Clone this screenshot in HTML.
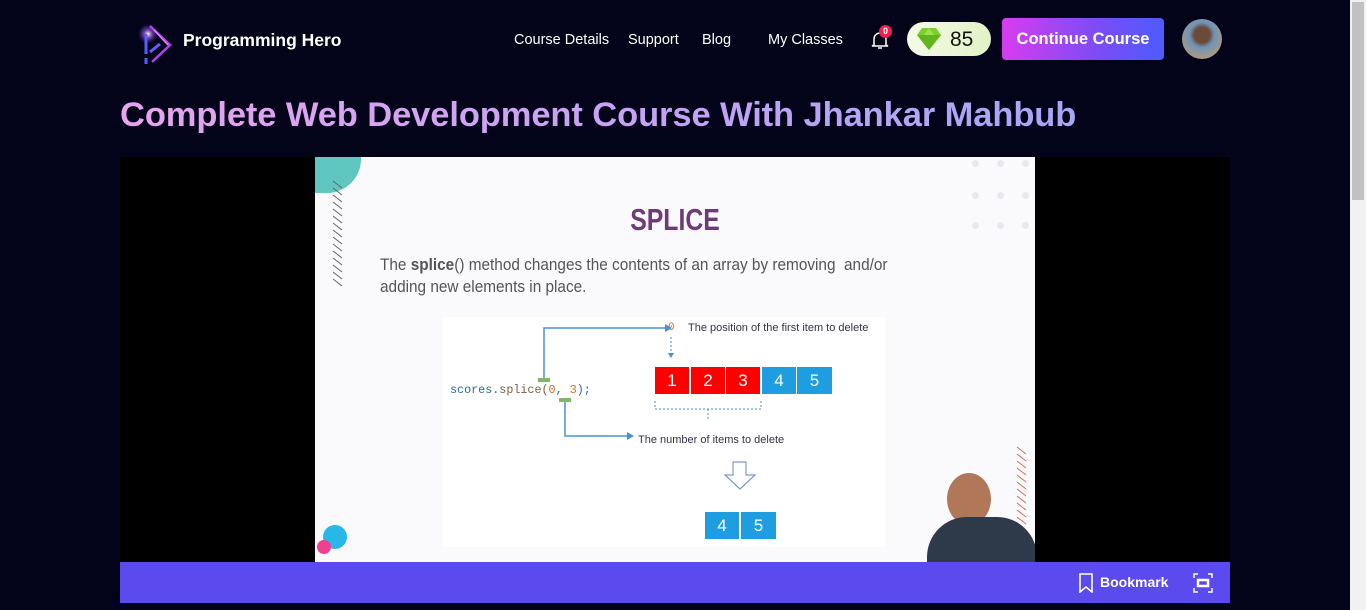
<!DOCTYPE html>
<html><head><meta charset="utf-8"><style>
*{margin:0;padding:0;box-sizing:border-box}
html,body{width:1366px;height:610px;overflow:hidden;background:#03031a;font-family:"Liberation Sans",sans-serif}
.abs{position:absolute}
.nav a{position:absolute;color:#fff;font-size:14.5px;top:32px;text-decoration:none}
.sb{left:1350px;top:0;width:16px;height:610px;background:#f1f1f1}
.cell{position:absolute;top:0;width:35px;height:27px;color:#fff;font-size:17px;text-align:center;line-height:27px;border-right:1px solid #fff}
.dot{position:absolute;width:7px;height:7px;border-radius:50%;background:#e8e8ee}
</style></head><body>
<svg class="abs" style="left:136px;top:22px" width="42" height="44" viewBox="0 0 42 44">
<defs><radialGradient id="g" cx="0.5" cy="0.5" r="0.5"><stop offset="0" stop-color="#fff"/><stop offset="0.4" stop-color="#c070ff" stop-opacity=".6"/><stop offset="1" stop-color="#6040ff" stop-opacity="0"/></radialGradient></defs>
<circle cx="12" cy="12" r="10" fill="url(#g)"/>
<path d="M10 12 L10 32" stroke="#5a5cff" stroke-width="3"/>
<path d="M10 36 L10 42" stroke="#5a5cff" stroke-width="3"/>
<path d="M14 4 L34 23 L16 40" fill="none" stroke="#b040f0" stroke-width="2.5"/>
<path d="M18 8 L32 23" stroke="#e080ff" stroke-width="1.5"/>
<path d="M14 30 L24 22" stroke="#6a5cff" stroke-width="3"/>
</svg>
<div class="abs" style="left:183px;top:30px;color:#fff;font-size:17.5px;font-weight:bold">Programming Hero</div>
<div class="nav">
<a style="left:514px">Course Details</a><a style="left:628px">Support</a><a style="left:702px">Blog</a><a style="left:768px">My Classes</a>
</div>
<svg class="abs" style="left:870px;top:30px" width="20" height="20" viewBox="0 0 20 20"><path d="M4 15 L4 9 A6 6 0 0 1 16 9 L16 15 L18 16 L2 16 Z" fill="none" stroke="#fff" stroke-width="1.5"/><path d="M8 18 L12 18" stroke="#fff" stroke-width="1.5"/></svg>
<div class="abs" style="left:879px;top:25px;width:13px;height:13px;border-radius:50%;background:#ee2050;color:#fff;font-size:9px;font-weight:bold;text-align:center;line-height:13px">0</div>
<div class="abs" style="left:907px;top:22px;width:84px;height:34px;border-radius:17px;background:linear-gradient(90deg,#f4fbe4,#e2f2c8)"></div>
<svg class="abs" style="left:916px;top:27px" width="26" height="24" viewBox="0 0 26 24"><path d="M6 1 L20 1 L25 8 L13 23 L1 8 Z" fill="#7ccf2a"/><path d="M1 8 L25 8 L13 23 Z" fill="#5fb61c"/><path d="M8 8 L13 1 L18 8 Z" fill="#9ee04a"/></svg>
<div class="abs" style="left:950px;top:28px;font-size:21px;color:#111">85</div>
<div class="abs" style="left:1002px;top:18px;width:162px;height:42px;border-radius:4px;background:linear-gradient(90deg,#d63df0,#7b4cf5 60%,#4c5cff);color:#fff;font-size:16.5px;font-weight:bold;text-align:center;line-height:42px">Continue Course</div>
<div class="abs" style="left:1182px;top:19px;width:40px;height:40px;border-radius:50%;background:radial-gradient(circle at 50% 40%,#6b4a3a 0 25%,#6f94b8 40%,#b49a7a 80%)"></div>
<div class="abs" style="left:120px;top:96px;font-size:34.5px;font-weight:bold;letter-spacing:-0.1px;background:linear-gradient(90deg,#e8a4ee,#c2a2f4 60%,#a7a7f5);-webkit-background-clip:text;color:transparent;white-space:nowrap">Complete Web Development Course With Jhankar Mahbub</div>
<div class="abs" style="left:120px;top:157px;width:1110px;height:405px;background:#000"></div>
<div class="abs" style="left:315px;top:157px;width:720px;height:405px;background:#fafafd;overflow:hidden">
 <div class="abs" style="left:-30px;top:-30px;width:76px;height:66px;border-radius:0 0 34px 0;background:#5fc7bf"></div>
 <svg class="abs" style="left:16px;top:22px" width="14" height="110"><g stroke="#666" stroke-width="1"><path d="M2 2 l9 7M2 9 l9 7M2 16 l9 7M2 23 l9 7M2 30 l9 7M2 37 l9 7M2 44 l9 7M2 51 l9 7M2 58 l9 7M2 65 l9 7M2 72 l9 7M2 79 l9 7M2 86 l9 7M2 93 l9 7M2 100 l9 7"/></g></svg>
 <div class="dot" style="left:657px;top:3px"></div><div class="dot" style="left:682px;top:3px"></div><div class="dot" style="left:707px;top:3px"></div>
 <div class="dot" style="left:657px;top:35px"></div><div class="dot" style="left:682px;top:35px"></div><div class="dot" style="left:707px;top:35px"></div>
 <div class="dot" style="left:657px;top:65px"></div><div class="dot" style="left:682px;top:65px"></div><div class="dot" style="left:707px;top:65px"></div>
 <div class="abs" style="left:0;width:720px;top:45px;text-align:center;font-size:31px;font-weight:bold;color:#6e3b77;transform:scaleX(.8)">SPLICE</div>
 <div class="abs" style="left:65px;top:97px;width:590px;font-size:16.5px;line-height:22px;color:#555;transform:scaleX(.93);transform-origin:left top">The <b>splice</b>() method changes the contents of an array by removing &nbsp;and/or adding new elements in place.</div>
 <div class="abs" style="left:128px;top:160px;width:442px;height:230px;background:#fff">
  <svg class="abs" style="left:0;top:0" width="442" height="230">
   <path d="M101 62 L101 11 L222 11" fill="none" stroke="#4a90d0" stroke-width="1.5"/><path d="M222 7 L229 11 L222 15Z" fill="#4a90d0"/>
   <path d="M122 84 L122 119 L184 119" fill="none" stroke="#4a90d0" stroke-width="1.5"/><path d="M184 115 L191 119 L184 123Z" fill="#4a90d0"/>
   <rect x="95" y="61" width="12" height="4" fill="#7fb86a"/><rect x="116" y="81" width="12" height="4" fill="#7fb86a"/>
   <path d="M228 20 L228 38" stroke="#4a90d0" stroke-dasharray="2 2"/><path d="M225 36 L228 41 L231 36Z" fill="#4a90d0"/>
   <path d="M212 84 L212 92 L318 92 L318 84 M265 92 L265 102" fill="none" stroke="#4a90d0" stroke-dasharray="2 2"/>
   <path d="M290 145 L303 145 L303 158 L312 158 L297 172 L282 158 L290 158 Z" fill="#fff" stroke="#7a9cc8" stroke-width="1.2"/>
  </svg>
  <div class="abs" style="left:225px;top:5px;font-family:'Liberation Mono',monospace;font-size:11px;color:#c07030">0</div>
  <div class="abs" style="left:245px;top:5px;font-size:11px;color:#334">The position of the first item to delete</div>
  <div class="abs" style="left:195px;top:117px;font-size:11px;color:#334">The number of items to delete</div>
  <div class="abs" style="left:7px;top:67px;font-family:'Liberation Mono',monospace;font-size:11.5px;color:#2a6aa8;transform:scaleX(1.02);transform-origin:left">scores.<span style="color:#806040">splice(</span><span style="color:#c07030">0</span>, <span style="color:#c07030">3</span>);</div>
  <div class="abs" style="left:212px;top:50px;width:178px;height:27px">
   <div class="cell" style="left:0;background:#f00">1</div><div class="cell" style="left:36px;background:#f00">2</div><div class="cell" style="left:71px;background:#f00">3</div><div class="cell" style="left:107px;background:#1e9ee0">4</div><div class="cell" style="left:142px;background:#1e9ee0;border:0">5</div>
  </div>
  <div class="abs" style="left:262px;top:195px;width:72px;height:27px">
   <div class="cell" style="left:0;background:#1e9ee0">4</div><div class="cell" style="left:36px;background:#1e9ee0;border:0">5</div>
  </div>
 </div>
 <div class="abs" style="left:8px;top:368px;width:24px;height:24px;border-radius:50%;background:#28b8e8"></div>
 <div class="abs" style="left:2px;top:383px;width:14px;height:14px;border-radius:50%;background:#f04090"></div>
 <svg class="abs" style="left:700px;top:288px" width="14" height="90"><g stroke="#e06a50"><path d="M2 2 l9 7M2 9 l9 7M2 16 l9 7M2 23 l9 7M2 30 l9 7M2 37 l9 7M2 44 l9 7M2 51 l9 7M2 58 l9 7M2 65 l9 7M2 72 l9 7M2 79 l9 7"/></g></svg>
 <div class="abs" style="left:632px;top:316px;width:44px;height:52px;border-radius:50%;background:#b07858"></div>
 <div class="abs" style="left:612px;top:360px;width:110px;height:60px;border-radius:40px 40px 0 0;background:#2e3a4a"></div>
</div>
<div class="abs" style="left:120px;top:562px;width:1110px;height:41px;background:#5b4aed"></div>
<svg class="abs" style="left:1078px;top:573px" width="16" height="20" viewBox="0 0 16 20"><path d="M2 1 L14 1 L14 19 L8 14 L2 19 Z" fill="none" stroke="#fff" stroke-width="1.6"/></svg>
<div class="abs" style="left:1100px;top:574px;color:#fff;font-size:14px;font-weight:bold">Bookmark</div>
<svg class="abs" style="left:1193px;top:573px" width="20" height="20" viewBox="0 0 20 20"><g stroke="#fff" stroke-width="1.5" fill="none"><path d="M1 5 V1 H5 M15 1 H19 V5 M19 15 V19 H15 M5 19 H1 V15"/><rect x="5" y="7" width="10" height="6" stroke-width="2.5"/></g></svg>
<div class="abs sb"></div>
<div class="abs" style="left:1352px;top:2px;width:12px;height:198px;background:#c1c1c1"></div>
</body></html>
